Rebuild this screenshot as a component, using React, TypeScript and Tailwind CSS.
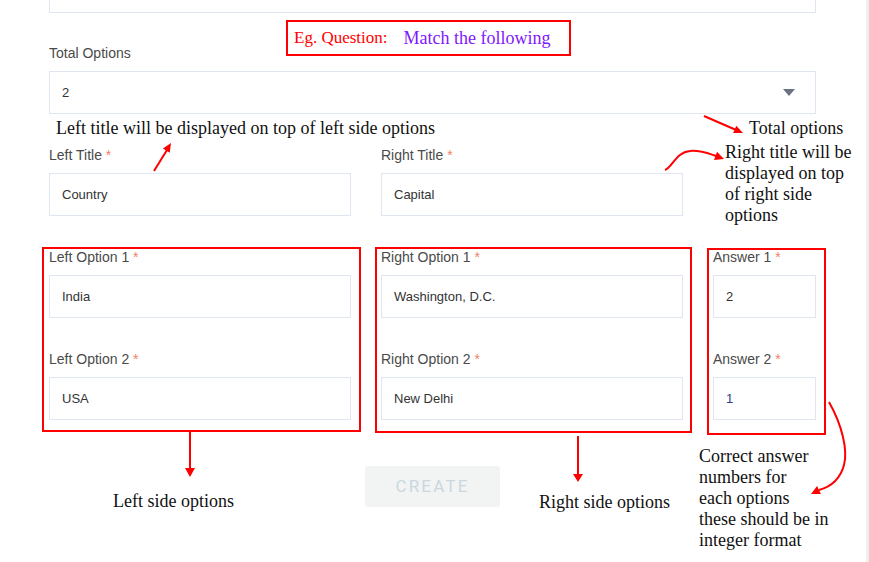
import React from "react";

const sans = { fontFamily: '"Liberation Sans", Arial, sans-serif' };
const serif = { fontFamily: '"Liberation Serif", "Times New Roman", serif' };

function Field({ label, value, req = true, valueClass = "text-[#333]" }: { label: string; value: string; req?: boolean; valueClass?: string }) {
  return (
    <div className="flex flex-col">
      <div className="h-[20px] leading-[20px] text-[14px] text-[#4a4a4a]">
        {label}
        {req && <span className="text-[#f0826a]"> *</span>}
      </div>
      <div className={`mt-[8px] h-[43px] border border-[#dfe6f1] flex items-center px-[12px] pt-[1px] text-[13px] ${valueClass}`}>{value}</div>
    </div>
  );
}

export default function App() {
  return (
    <div className="relative w-[869px] h-[562px] overflow-hidden bg-white flex" style={sans}>
      <div className="w-[866px] pl-[49px]">
        <div className="h-[13px] w-[767px] border-x border-b border-[#dfe6f1]" />
        <div className="mt-[30px] w-[767px] flex flex-col">
          <div className="h-[20px] leading-[20px] text-[14px] text-[#4a4a4a]">Total Options</div>
          <div className="mt-[8px] h-[43px] border border-[#dfe6f1] flex items-center justify-between pl-[12px] pr-[20px] text-[13px] text-[#333]">
            <span>2</span>
            <svg width="12" height="8" viewBox="0 0 12 8"><polygon points="0,0 12,0 6,7" fill="#6b7280" /></svg>
          </div>
        </div>
        <div className="mt-[31px] grid grid-cols-[302px_302px_103px] gap-x-[30px] gap-y-[31px] w-[767px]">
          <Field label="Left Title" value="Country" />
          <Field label="Right Title" value="Capital" />
          <div />
          <Field label="Left Option 1" value="India" />
          <Field label="Right Option 1" value="Washington, D.C." />
          <Field label="Answer 1" value="2" />
          <Field label="Left Option 2" value="USA" />
          <Field label="Right Option 2" value="New Delhi" />
          <Field label="Answer 2" value="1" valueClass="text-[#2f3a86]" />
        </div>
        <div className="mt-[46px] w-[767px] flex justify-center">
          <div className="w-[135px] h-[41px] rounded-[3px] bg-[#f2f3f3] flex items-center justify-center text-[17px] tracking-[2.2px] text-[#c9d8de]" style={{ fontFamily: "Roboto, sans-serif" }}>
            CREATE
          </div>
        </div>
      </div>
      <div className="w-[3px] bg-[#efefef]" />

      {/* annotations */}
      <div className="absolute left-[286px] top-[20px] w-[285px] h-[36px] border-2 border-[#ff0000] flex items-center pl-[6px]" style={serif}>
        <span className="text-[#ff0000] text-[17px]">Eg. Question:</span>
        <span className="ml-[16px] text-[#7f17ff] text-[18px]">Match the following</span>
      </div>
      <div className="absolute left-[56px] top-[118px] text-[18px] leading-[21px] text-[#111] whitespace-nowrap" style={serif}>
        Left title will be displayed on top of left side options
      </div>
      <div className="absolute left-[749px] top-[118px] text-[18px] leading-[21px] text-[#111] whitespace-nowrap" style={serif}>
        Total options
      </div>
      <div className="absolute left-[725px] top-[142px] text-[18px] leading-[21px] text-[#111] whitespace-nowrap" style={serif}>
        Right title will be<br />displayed on top<br />of right side<br />options
      </div>
      <div className="absolute left-[42px] top-[247px] w-[319px] h-[185px] border-2 border-[#ff0000]" />
      <div className="absolute left-[375px] top-[247px] w-[317px] h-[186px] border-2 border-[#ff0000]" />
      <div className="absolute left-[707px] top-[248px] w-[119px] h-[187px] border-2 border-[#ff0000]" />
      <div className="absolute left-[113px] top-[491px] text-[18px] leading-[21px] text-[#111] whitespace-nowrap" style={serif}>
        Left side options
      </div>
      <div className="absolute left-[539px] top-[492px] text-[18px] leading-[21px] text-[#111] whitespace-nowrap" style={serif}>
        Right side options
      </div>
      <div className="absolute left-[699px] top-[446px] text-[18px] leading-[21px] text-[#111] whitespace-nowrap" style={serif}>
        Correct answer<br />numbers for<br />each options<br />these should be in<br />integer format
      </div>

      <svg className="absolute left-0 top-0 pointer-events-none" width="869" height="562" viewBox="0 0 869 562">
        <g stroke="#ff0000" strokeWidth="2" fill="none">
          <line x1="154" y1="171" x2="167" y2="150" />
          <line x1="704" y1="116" x2="735" y2="129.5" />
          <path d="M665,170 C672,168 676,152 690,151 C700,150 707,153 716,156" />
          <line x1="190" y1="432" x2="190" y2="469" />
          <line x1="578" y1="436" x2="578" y2="474" />
          <path d="M829,402 C842,425 848,450 844,465 C840,480 830,487 819,490" />
        </g>
        <g fill="#ff0000">
          <polygon points="171,143 169.7,152.8 162.9,148.6" />
          <polygon points="743,133 733.1,133.1 736.3,125.7" />
          <polygon points="724,159 714,160.1 717,151.7" />
          <polygon points="185,468 195,468 190,477" />
          <polygon points="573,474 583,474 578,482" />
          <polygon points="811,494 820.9,494.1 817.1,486.1" />
        </g>
      </svg>
    </div>
  );
}
